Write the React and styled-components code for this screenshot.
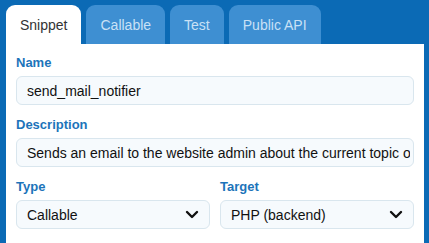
import React from 'react'
import styled, { createGlobalStyle } from 'styled-components'

const GlobalStyle = createGlobalStyle`
	html, body {
		margin: 0;
		padding: 0;
		background: #0b6ab5;
		font-family: 'Liberation Sans', Arial, sans-serif;
	}
`

const tabs = ['Snippet', 'Callable', 'Test', 'Public API']

const Chevron = () => (
	<svg width='14' height='9' viewBox='0 0 14 9' fill='none'>
		<path
			d='M2 2l5 5 5-5'
			stroke='#111'
			strokeWidth='2.4'
			strokeLinecap='round'
			strokeLinejoin='round'
		/>
	</svg>
)

const App = () => {
	const [active, setActive] = React.useState(0)

	return (
		<>
			<GlobalStyle />
			<Wrapper>
				<TabBar>
					{tabs.map((tab, i) => (
						<Tab key={tab} $active={i === active} onClick={() => setActive(i)}>
							{tab}
						</Tab>
					))}
				</TabBar>
				<Panel>
					<Field>
						<Label>Name</Label>
						<Input defaultValue='send_mail_notifier' />
					</Field>
					<Field>
						<Label>Description</Label>
						<Input defaultValue='Sends an email to the website admin about the current topic of discussion' />
					</Field>
					<Row>
						<Field>
							<Label>Type</Label>
							<Select>
								<span>Callable</span>
								<Chevron />
							</Select>
						</Field>
						<Field>
							<Label>Target</Label>
							<Select>
								<span>PHP (backend)</span>
								<Chevron />
							</Select>
						</Field>
					</Row>
					<Field>
						<Label>Arguments</Label>
						<Input defaultValue='' />
					</Field>
				</Panel>
			</Wrapper>
		</>
	)
}

const Wrapper = styled.div`
	padding: 5px 5px 0 6px;
	width: 429px;
	height: 243px;
	box-sizing: border-box;
	overflow: hidden;
`

const TabBar = styled.div`
	display: flex;
	gap: 5px;
`

const Tab = styled.div`
	height: 39px;
	padding: 0 14px;
	display: flex;
	align-items: center;
	justify-content: center;
	border-radius: 9px 9px 0 0;
	font-size: 14px;
	cursor: pointer;
	background: ${(p) => (p.$active ? '#ffffff' : '#3e8fd2')};
	color: ${(p) => (p.$active ? '#333333' : '#c9e1f6')};
`

const Panel = styled.div`
	background: #ffffff;
	width: 418px;
	box-sizing: border-box;
	padding: 11px 10px 12px;
	display: flex;
	flex-direction: column;
	gap: 12px;
`

const Field = styled.div`
	display: flex;
	flex-direction: column;
	gap: 5px;
	min-width: 0;
`

const Row = styled.div`
	display: grid;
	grid-template-columns: 1fr 1fr;
	gap: 10px;
`

const Label = styled.label`
	font-size: 13px;
	line-height: 16px;
	font-weight: bold;
	color: #1c74ba;
`

const Input = styled.input`
	height: 29px;
	box-sizing: border-box;
	width: 100%;
	border: 1px solid #d9e6ee;
	border-radius: 6px;
	background: #f6fafd;
	padding: 0 3px 0 10px;
	font-family: inherit;
	font-size: 14px;
	color: #111;
	outline: none;
`

const Select = styled.div`
	height: 29px;
	box-sizing: border-box;
	border: 1px solid #d9e6ee;
	border-radius: 6px;
	background: #f6fafd;
	padding: 0 10px;
	display: flex;
	align-items: center;
	justify-content: space-between;
	font-size: 14px;
	color: #111;
`

export default App
